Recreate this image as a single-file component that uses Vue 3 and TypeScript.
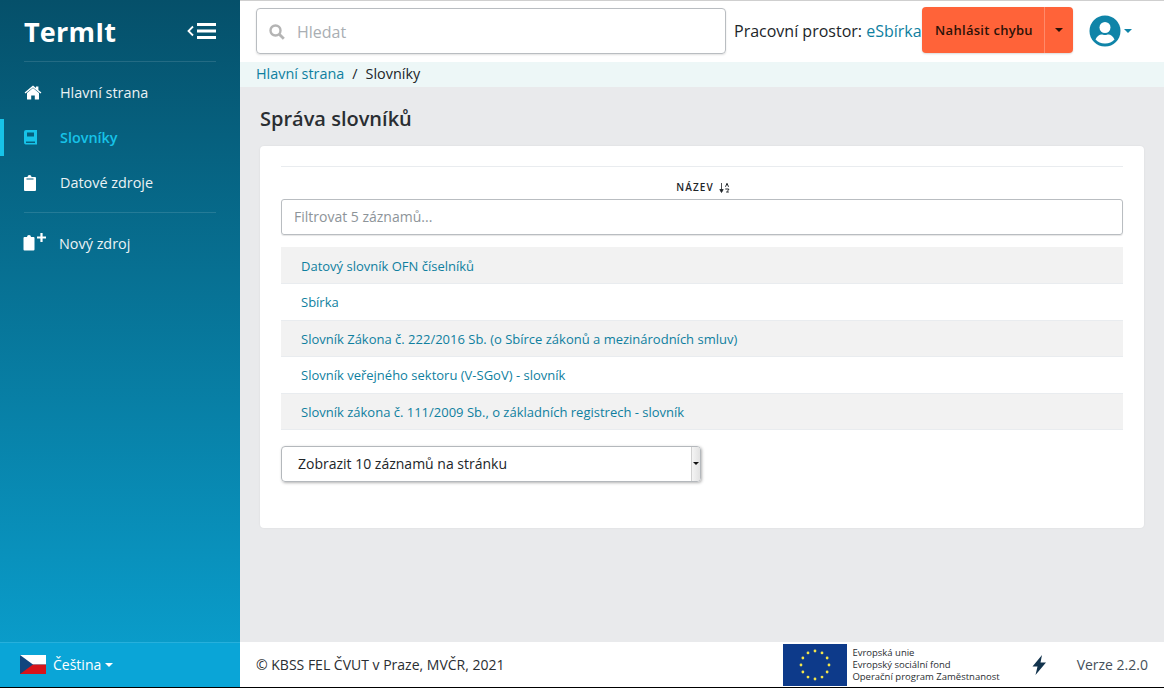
<script setup lang="ts">
const rows: string[] = [
  'Datový slovník OFN číselníků',
  'Sbírka',
  'Slovník Zákona č. 222/2016 Sb. (o Sbírce zákonů a mezinárodních smluv)',
  'Slovník veřejného sektoru (V-SGoV) - slovník',
  'Slovník zákona č. 111/2009 Sb., o základních registrech - slovník',
]
const stars = Array.from({ length: 12 }, (_, i) => {
  const a = (i * Math.PI) / 6
  return { x: 32 + 14 * Math.sin(a), y: 21 - 14 * Math.cos(a) }
})
</script>

<template>
  <div class="app">
    <aside class="sidebar">
      <div class="brand">
        <span class="logo">TermIt</span>
        <svg class="toggle" width="30" height="16" viewBox="0 0 30 16">
          <path d="M7 3.500 2.500 8 7 12.500" fill="none" stroke="#fff" stroke-width="1.800" />
          <path d="M11 1.500h19M11 8h19M11 14.500h19" stroke="#fff" stroke-width="3" />
        </svg>
      </div>
      <nav class="nav">
        <a class="item">
          <svg class="ico" width="18" height="15" viewBox="0 0 18 15">
            <path d="M9 3 3 8v6a.6.6 0 0 0 .6.6h3.600v-4h3.600v4h3.600A.6.6 0 0 0 15 14V8z" fill="#fff" />
            <path d="M.6 7.400 9 .6l3 2.400V1.400h2.400V5l3 2.400-.9 1.100L9 2.400 1.500 8.500z" fill="#fff" />
          </svg>
          <span>Hlavní strana</span>
        </a>
        <a class="item active">
          <svg class="ico" width="18" height="15" viewBox="0 0 18 15">
            <path fill-rule="evenodd" d="M2 0H13v14.500H2A1.900 1.900 0 0 1 0 12.600V2A2 2 0 0 1 2 0zM3 2.500v4h7v-4zM2 11.500v1.500h9v-1.500z" fill="#17c3e8" />
          </svg>
          <span>Slovníky</span>
        </a>
        <a class="item">
          <svg class="ico" width="18" height="16" viewBox="0 0 18 16">
            <path d="M1 2H3.500a2 2 0 0 1 4 0H11A1 1 0 0 1 12 3v12a1 1 0 0 1-1 1H1a1 1 0 0 1-1-1V3a1 1 0 0 1 1-1z" fill="#fff" />
            <rect x="2.500" y="3.500" width="7" height="1" fill="#0a5f80" />
          </svg>
          <span>Datové zdroje</span>
        </a>
      </nav>
      <div class="sep"></div>
      <a class="item add">
        <svg class="ico2" width="24" height="18" viewBox="0 0 24 18">
          <path d="M1.500 4H4a2 2 0 0 1 4 0h2.500a1 1 0 0 1 1 1v11.500a1 1 0 0 1-1 1h-9a1 1 0 0 1-1-1V5a1 1 0 0 1 1-1z" fill="#fff" />
          <path d="M14 4.500h9M18.500 0v9" stroke="#fff" stroke-width="2.200" />
        </svg>
        <span>Nový zdroj</span>
      </a>
      <div class="lang">
        <svg class="flag" width="26" height="19" viewBox="0 0 26 19">
          <rect width="26" height="9.500" fill="#fff" />
          <rect y="9.500" width="26" height="9.500" fill="#d7141a" />
          <path d="M0 0 13 9.500 0 19z" fill="#11457e" />
        </svg>
        <span>Čeština</span>
        <i class="caret white"></i>
      </div>
    </aside>

    <div class="main">
      <header class="top">
        <div class="search">
          <svg width="16" height="16" viewBox="0 0 16 16">
            <circle cx="6.500" cy="6.500" r="5" fill="none" stroke="#b4b4b4" stroke-width="2.400" />
            <path d="m10.500 10.500 4.300 4.300" stroke="#b4b4b4" stroke-width="2.800" />
          </svg>
          <span>Hledat</span>
        </div>
        <div class="ws">Pracovní prostor: <a>eSbírka</a></div>
        <div class="report">
          <span class="rlabel">Nahlásit chybu</span>
          <span class="rcaret"><i class="caret dark"></i></span>
        </div>
        <div class="user">
          <svg width="32" height="32" viewBox="0 0 32 32">
            <circle cx="16" cy="16" r="15.500" fill="#0f84a8" />
            <circle cx="16" cy="12.500" r="5.500" fill="#fff" />
            <path d="M6.500 24.500c1.500-3.500 4-5 6-5 1 0 2 .6 3.500.6s2.500-.6 3.500-.6c2 0 4.500 1.500 6 5A12.500 12.500 0 0 1 16 28.500a12.500 12.500 0 0 1-9.500-4z" fill="#fff" />
          </svg>
          <i class="caret blue"></i>
        </div>
      </header>
      <div class="crumb"><a>Hlavní strana</a><span class="slash">/</span><span>Slovníky</span></div>
      <main class="content">
        <h1>Správa slovníků</h1>
        <section class="card">
          <div class="th">
            <span>NÁZEV</span>
            <svg width="11" height="10" viewBox="0 0 11 10">
              <path d="M2.500 0v7M.8 6.500 2.500 9.500l1.700-3z" fill="#212529" stroke="#212529" stroke-width=".8" />
              <path d="M6.500 3.800 8 .3l1.500 3.500M6.300 6h3.400v.9L7.500 9h2.300" fill="none" stroke="#212529" stroke-width="1" />
            </svg>
          </div>
          <div class="filter">Filtrovat 5 záznamů...</div>
          <div class="rows">
            <div v-for="(r, i) in rows" :key="r" class="row" :class="{ odd: i % 2 === 0 }"><a>{{ r }}</a></div>
          </div>
          <div class="select">
            <span>Zobrazit 10 záznamů na stránku</span>
            <span class="sbtn"><i class="scaret"></i></span>
          </div>
        </section>
      </main>
      <footer class="foot">
        <span class="copy">© KBSS FEL ČVUT v Praze, MVČR, 2021</span>
        <div class="eu">
          <svg width="64" height="42" viewBox="0 0 64 42">
            <rect width="64" height="42" fill="#0d3a8a" />
            <circle v-for="(s, i) in stars" :key="i" :cx="s.x" :cy="s.y" r="1.400" fill="#f4e64a" />
          </svg>
          <div class="eutext">
            <span>Evropská unie</span>
            <span>Evropský sociální fond</span>
            <span>Operační program Zaměstnanost</span>
          </div>
        </div>
        <svg class="bolt" width="16" height="20" viewBox="0 0 16 20">
          <path d="M11 0 1.500 11.500h5L4.500 20 15 7.500H9.500z" fill="#12334d" />
        </svg>
        <span class="ver">Verze 2.2.0</span>
      </footer>
    </div>
  </div>
</template>

<style scoped>
.app {
  display: flex;
  height: 687px;
  width: 1164px;
  overflow: hidden;
  font-family: "Open Sans", sans-serif;
  font-size: 14px;
  color: #212529;
  background: #fff;
}
a { color: #0f7f9f; text-decoration: none; }
.sidebar {
  width: 240px;
  flex: none;
  display: flex;
  flex-direction: column;
  background: linear-gradient(180deg, #05506a 0%, #0aa1d0 100%);
  color: #fff;
}
.brand {
  margin: 0 24px;
  height: 62px;
  display: flex;
  align-items: center;
  justify-content: space-between;
  border-bottom: 1px solid rgba(255,255,255,.12);
  box-sizing: border-box;
}
.logo { font-size: 27px; font-weight: 700; letter-spacing: .2px; line-height: 1; margin-top: 2px; }
.nav { display: flex; flex-direction: column; padding-top: 8px; }
.item {
  height: 45px;
  display: flex;
  align-items: center;
  padding-left: 24px;
  color: #fff;
  font-size: 14.400px;
}
.item span { opacity: .92; }
.ico { width: 18px; margin-right: 18px; flex: none; }
.active {
  color: #17c3e8;
  font-weight: 600;
  position: relative;
}
.active::before {
  content: "";
  position: absolute;
  left: 0;
  top: 4px;
  width: 4px;
  height: 37px;
  background: #17c3e8;
}
.active span { opacity: 1; }
.sep { margin: 7px 24px 0; height: 1px; background: rgba(255,255,255,.12); }
.add { height: 61px; padding-left: 23px; }
.ico2 { margin-right: 12px; margin-top: -3px; flex: none; }
.lang {
  margin-top: auto;
  height: 45px;
  box-sizing: border-box;
  display: flex;
  align-items: center;
  padding: 0 0 2px 20px;
  background: #0aa5d7;
  border-top: 1px solid #27b0dc;
  font-size: 14px;
}
.flag { margin-right: 7px; }
.caret {
  display: inline-block;
  border-left: 4px solid transparent;
  border-right: 4px solid transparent;
  border-top: 4px solid currentColor;
}
.caret.white { color: #fff; margin-left: 4px; margin-top: 1px; }
.caret.dark { color: #2b1208; }
.caret.blue { color: #0f84a8; margin-left: 3px; }
.main { flex: 1; min-width: 0; display: flex; flex-direction: column; }
.top {
  height: 62px;
  flex: none;
  box-sizing: border-box;
  display: flex;
  align-items: center;
  padding: 0 0 1px 16px;
  border-top: 1px solid #cfcfcf;
}
.search {
  width: 470px;
  height: 46px;
  box-sizing: border-box;
  border: 1px solid #b9bdc1;
  border-radius: 4px;
  box-shadow: 0 1px 2px rgba(0,0,0,.12);
  display: flex;
  align-items: center;
  gap: 12px;
  padding-left: 12px;
  margin-right: 8px;
  color: #a9aeb3;
  font-size: 16px;
}
.search svg { margin-top: 1px; }
.search span { margin-top: 1px; }
.ws { font-size: 16px; color: #212529; white-space: nowrap; width: 188px; }
.ws a { color: #0f7f9f; }
.report {
  display: flex;
  height: 46px;
  width: 151px;
  margin: -1px 0 1px;
  border-radius: 4px;
  background: #ff6339;
  box-shadow: 0 1px 2px rgba(0,0,0,.15);
  color: #2b1208;
  font-weight: 600;
  font-size: 13px;
  letter-spacing: .3px;
  overflow: hidden;
}
.rlabel { width: 123px; padding-left: 2px; box-sizing: border-box; display: flex; align-items: center; justify-content: center; border-right: 1px solid #ff8a6a; }
.rcaret { flex: 1; display: flex; align-items: center; justify-content: center; }
.user { display: flex; align-items: center; margin-left: 16px; }
.crumb {
  height: 25px;
  flex: none;
  box-sizing: border-box;
  background: #edf7f7;
  display: flex;
  align-items: center;
  padding: 0 0 3px 16px;
  font-size: 14.400px;
}
.slash { margin: 0 8px; }
.content {
  flex: 1;
  background: #e9eaec;
  padding: 19px 20px 0;
  min-height: 0;
}
h1 {
  margin: 0 0 15px;
  font-size: 20px;
  font-weight: 600;
  line-height: 25px;
  color: #2a2e32;
}
.card {
  height: 382px;
  box-sizing: border-box;
  background: #fff;
  border-radius: 4px;
  box-shadow: 0 0 2px rgba(0,0,0,.08);
  padding: 20px 21px 0;
}
.th {
  border-top: 1px solid #e9ecef;
  height: 33px;
  box-sizing: border-box;
  padding: 13px 0 0 2px;
  display: flex;
  align-items: flex-start;
  justify-content: center;
  gap: 5px;
  font-size: 10px;
  font-weight: 600;
  letter-spacing: 1.100px;
  line-height: 15px;
  color: #212529;
}
.th svg { margin-top: 3px; }
.filter {
  height: 36px;
  box-sizing: border-box;
  border: 1px solid #b9bdc1;
  border-radius: 3px;
  box-shadow: 0 1px 1px rgba(0,0,0,.1);
  display: flex;
  align-items: center;
  padding: 0 0 2px 12px;
  color: #8d9499;
  font-size: 14px;
}
.rows { margin-top: 12.400px; }
.row {
  height: 36.600px;
  box-sizing: border-box;
  padding: 1px 0 0 20px;
  display: flex;
  align-items: center;
  font-size: 13px;
  border-bottom: 1px solid #e9ecef;
}
.row.odd { background: #f2f2f2; }
.select {
  margin-top: 15.600px;
  width: 420px;
  height: 36px;
  box-sizing: border-box;
  border: 1px solid #b4b8bc;
  border-radius: 4px;
  box-shadow: 1px 1px 3px rgba(0,0,0,.3);
  display: flex;
  align-items: center;
  justify-content: space-between;
  padding-left: 16px;
  font-size: 14px;
  color: #212529;
  overflow: hidden;
}
.sbtn {
  width: 8px;
  height: 100%;
  background: linear-gradient(90deg, #f4f4f4, #e2e2e2);
  border-left: 1px solid #d0d0d0;
  display: flex;
  align-items: center;
  justify-content: center;
}
.scaret { border-left: 3px solid transparent; border-right: 3px solid transparent; border-top: 3px solid #111; }
.foot {
  height: 45px;
  flex: none;
  box-sizing: border-box;
  background: #fff;
  display: flex;
  align-items: center;
  padding: 0 16px;
  font-size: 14px;
}
.copy { flex: 1; color: #2a2e32; }
.eu { display: flex; align-items: center; gap: 5px; margin-right: 31px; }
.eutext {
  display: flex;
  flex-direction: column;
  font-size: 9.500px;
  line-height: 12px;
  color: #2a2e32;
  white-space: nowrap;
}
.bolt { margin-right: 30px; }
.ver { color: #45505a; font-size: 14px; }
</style>

<style>
html, body { margin: 0; background: #000; }
</style>
